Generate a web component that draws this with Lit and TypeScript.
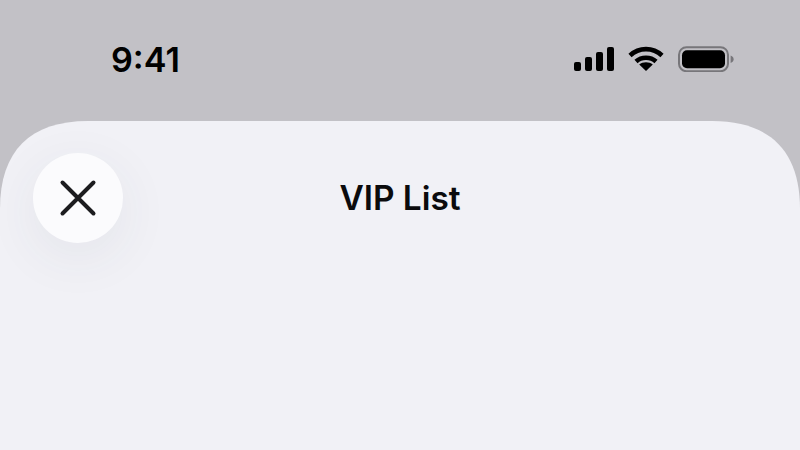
import { LitElement, html, css } from "lit";
import { customElement } from "lit/decorators.js";

@customElement("app-root")
export class AppRoot extends LitElement {
  static styles = css`
    :host {
      display: flex;
      flex-direction: column;
      width: 800px;
      height: 450px;
      overflow: hidden;
      background: #c2c1c6;
      font-family: Inter, "Liberation Sans", sans-serif;
      color: #0b0b0d;
    }
    .status {
      height: 121px;
      flex: none;
      display: flex;
      justify-content: space-between;
      align-items: flex-start;
      padding: 39px 65px 0 111px;
      box-sizing: border-box;
    }
    .time {
      font-size: 34.2px;
      line-height: 42px;
      font-weight: 600;
      color: #000;
    }
    .icons {
      display: flex;
      align-items: center;
      gap: 14px;
      padding-top: 7px;
      margin-right: 1px;
    }
    .icons svg { display: block; }
    .sheet {
      flex: 1;
      background: #f1f1f6;
      clip-path: path("M0 329 L0 88 C0 30 30 0 88 0 L712 0 C770 0 800 30 800 88 L800 329 Z");
      padding: 32px 33px 0;
    }
    .header {
      display: grid;
      grid-template-columns: 90px 1fr 90px;
      align-items: center;
    }
    .close {
      width: 90px;
      height: 90px;
      border-radius: 50%;
      background: #fbfbfd;
      box-shadow: 0 14px 54px rgba(60, 75, 85, 0.07);
      display: flex;
      align-items: center;
      justify-content: center;
    }
    .title {
      text-align: center;
      font-size: 33.4px;
      font-weight: 600;
      line-height: 40px;
    }
  `;

  render() {
    return html`
      <div class="status">
        <div class="time">9:41</div>
        <div class="icons">
          <svg width="40" height="26" viewBox="0 0 40 26" fill="#000">
            <rect x="0" y="16" width="7" height="9" rx="2"></rect>
            <rect x="11" y="11" width="7" height="14" rx="2"></rect>
            <rect x="22" y="6" width="7" height="19" rx="2"></rect>
            <rect x="33" y="1" width="7" height="24" rx="2"></rect>
          </svg>
          <svg width="36" height="26" viewBox="0 0 36 26" fill="none" stroke="#000" stroke-width="4.6">
            <path d="M2 9.5C11 1 25 1 34 9.5"></path>
            <path d="M8 15.5C13.5 10.5 22.5 10.5 28 15.5"></path>
            <path d="M18 25L11.2 18.6C14.8 15.6 21.2 15.6 24.8 18.6Z" fill="#000" stroke="none"></path>
          </svg>
          <svg width="56" height="26" viewBox="0 0 56 26" fill="none">
            <rect x="1" y="1.2" width="49" height="24" rx="7.5" stroke="#77767a" stroke-width="2"></rect>
            <rect x="4" y="4.2" width="43" height="18" rx="5" fill="#000"></rect>
            <path d="M52.6 9.5C54.6 10.2 55.6 11.6 55.6 13.2C55.6 14.8 54.6 16.2 52.6 16.9Z" fill="#77767a"></path>
          </svg>
        </div>
      </div>
      <div class="sheet">
        <div class="header">
          <div class="close">
            <svg width="40" height="40" viewBox="0 0 40 40" fill="none" stroke="#1c1c1f" stroke-width="4" stroke-linecap="round">
              <path d="M4.5 4.5L35.5 35.5M35.5 4.5L4.5 35.5"></path>
            </svg>
          </div>
          <div class="title">VIP List</div>
          <div></div>
        </div>
      </div>
    `;
  }
}
